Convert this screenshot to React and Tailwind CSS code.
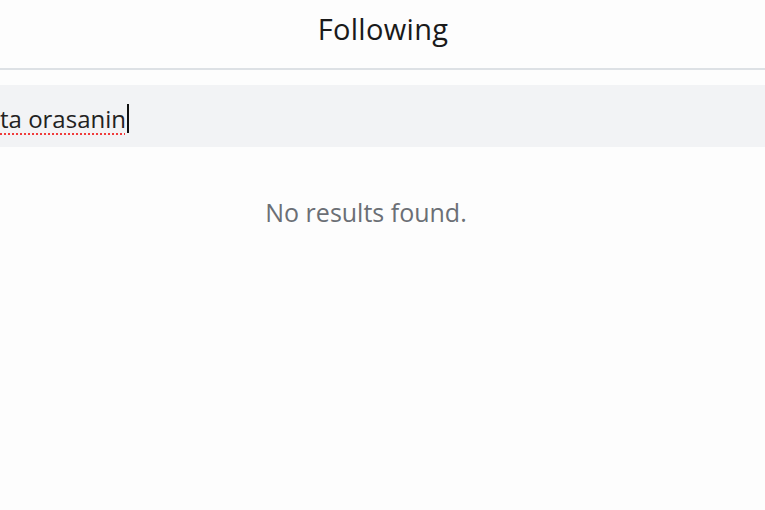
import React from 'react'

const App = () => {
    return (
        <div className="min-h-screen w-full bg-[#fdfdfd] font-['Open_Sans',sans-serif] overflow-hidden">
            {/* header */}
            <div className="h-[70px] flex justify-center pt-[9px] border-b-2 border-[#dde1e5]">
                <h1 className="text-[29px] leading-[40px] text-[#1a1a1a] pl-[1px] tracking-[0.3px]">Following</h1>
            </div>

            {/* search field */}
            <div className="mt-[15px] h-[62px] bg-[#f2f3f5] flex items-center">
                <div className="flex items-center mt-[5px]">
                    <span className="text-[24px] leading-[30px] text-[#222] underline decoration-dotted decoration-[#f03c3c] decoration-2 underline-offset-[6px]">
                        ta orasanin
                    </span>
                    <span className="ml-[1px] w-[2px] h-[29px] bg-[#111]" />
                </div>
            </div>

            {/* empty state */}
            <div className="flex justify-center pt-[49px] pr-[33px]">
                <p className="text-[25px] leading-[32px] text-[#6b6f75]">No results found.</p>
            </div>
        </div>
    )
}

export default App
